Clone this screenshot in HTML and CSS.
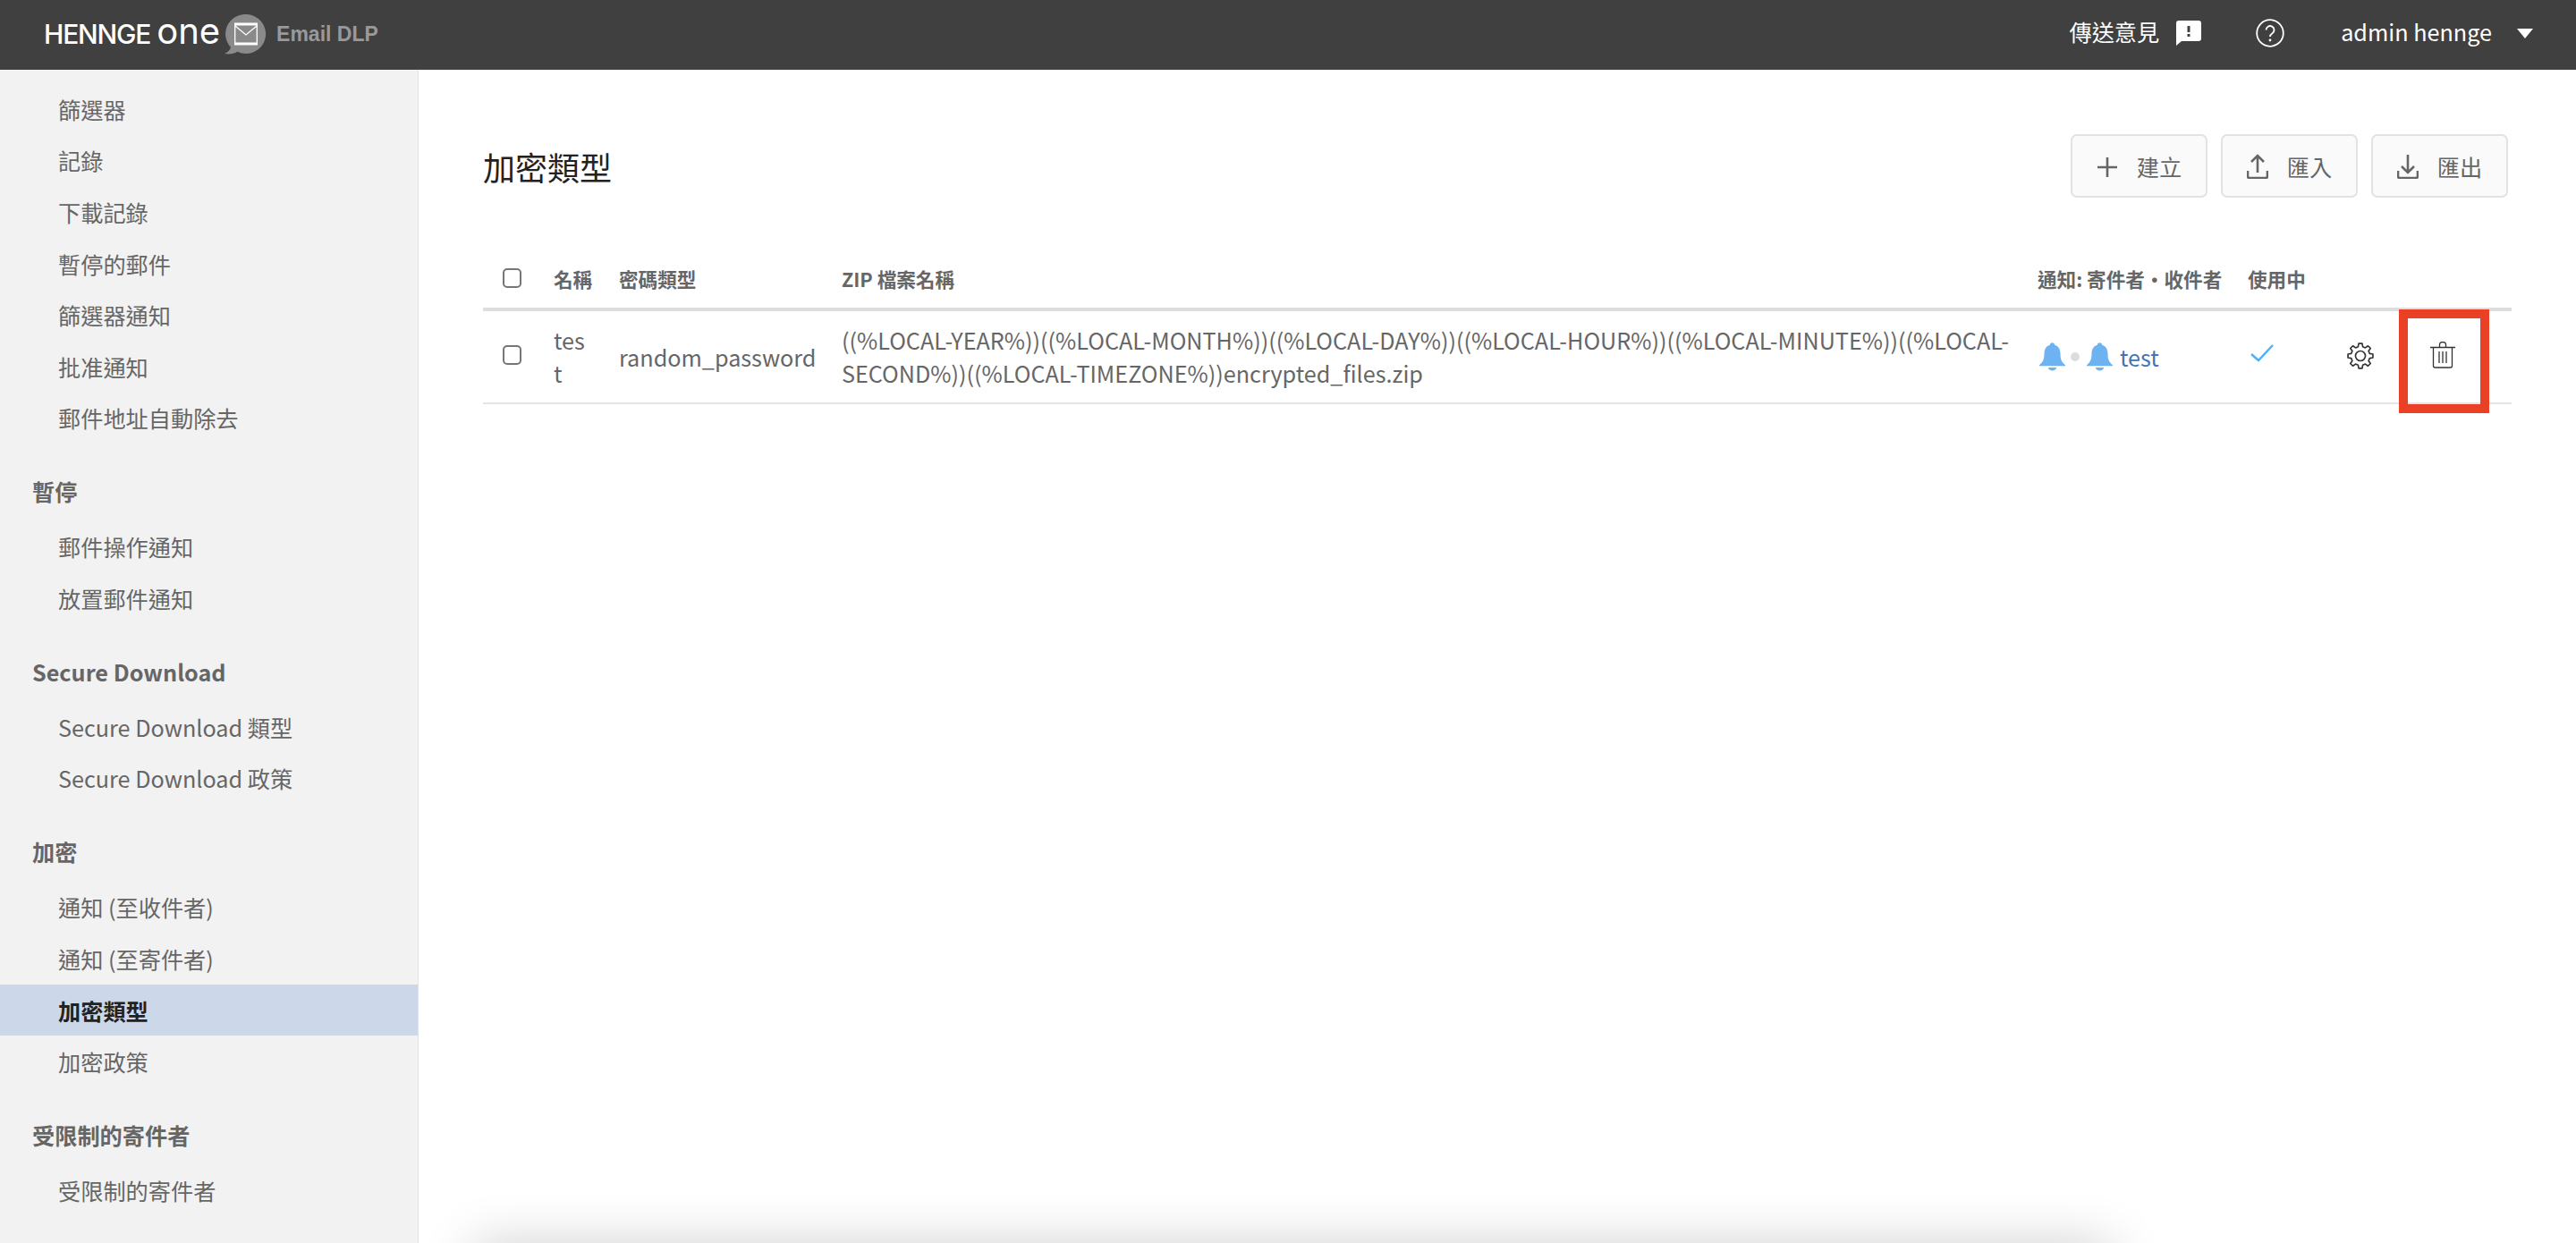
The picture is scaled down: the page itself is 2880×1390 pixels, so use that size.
FILE: index.html
```html
<!DOCTYPE html>
<html lang="zh-Hant">
<head>
<meta charset="utf-8">
<title>加密類型</title>
<link rel="stylesheet" href="styles.css">
</head>
<body>
<div class="app">
  <header class="topbar">
    <div class="brand">
      <span class="logo-word">HENNGE</span><span class="logo-one">one</span>
      <svg class="logo-icon" viewBox="0 0 48 46" aria-hidden="true">
        <path class="logo-bubble" d="M25 0a22 22 0 1 1-9.500 41.800C11 44.500 6 45 1 44c3.500-1.500 6-4 7-7A22 22 0 0 1 25 0z"/>
        <path class="logo-env" d="M12 11h26M12 33h26" stroke-width="3"/>
        <path class="logo-env" d="M12.700 11v22M37.300 11v22M13 13l12 10 12-10" stroke-width="1.300"/>
      </svg>
      <span class="product">Email DLP</span>
    </div>
    <div class="top-actions">
      <span class="feedback">傳送意見</span>
      <svg class="feedback-icon" viewBox="0 0 28 28" aria-hidden="true"><path d="M3 0h22a3 3 0 0 1 3 3v17a3 3 0 0 1-3 3H6l-6 5V3a3 3 0 0 1 3-3zM12.500 6v7h3V6zm0 9v3h3v-3z" fill-rule="evenodd"/></svg>
      <svg class="help-icon" viewBox="0 0 32 32" aria-hidden="true"><circle cx="16" cy="16" r="14.800"/><path d="M11.500 12.500a4.500 4.500 0 1 1 7 3.800c-1.500 1-2.500 1.800-2.500 3.700"/><circle class="help-dot" cx="16" cy="24" r="1.400"/></svg>
      <span class="user">admin hennge</span>
      <span class="caret"></span>
    </div>
  </header>
  <div class="body">
    <nav class="sidebar">
      <a class="nav-item">篩選器</a>
      <a class="nav-item">記錄</a>
      <a class="nav-item">下載記錄</a>
      <a class="nav-item">暫停的郵件</a>
      <a class="nav-item">篩選器通知</a>
      <a class="nav-item">批准通知</a>
      <a class="nav-item">郵件地址自動除去</a>
      <h3 class="nav-head">暫停</h3>
      <a class="nav-item">郵件操作通知</a>
      <a class="nav-item">放置郵件通知</a>
      <h3 class="nav-head">Secure Download</h3>
      <a class="nav-item">Secure Download 類型</a>
      <a class="nav-item">Secure Download 政策</a>
      <h3 class="nav-head">加密</h3>
      <a class="nav-item">通知 (至收件者)</a>
      <a class="nav-item">通知 (至寄件者)</a>
      <a class="nav-item active">加密類型</a>
      <a class="nav-item">加密政策</a>
      <h3 class="nav-head">受限制的寄件者</h3>
      <a class="nav-item">受限制的寄件者</a>
    </nav>
    <main class="content">
      <div class="toolbar">
        <h1 class="title">加密類型</h1>
        <div class="buttons">
          <button class="btn"><svg class="btn-icon" viewBox="0 0 24 28" aria-hidden="true"><path d="M12 4v22M1 15h22"/></svg>建立</button>
          <button class="btn"><svg class="btn-icon" viewBox="0 0 24 28" aria-hidden="true"><path d="M12 21V2M5 9l7-7 7 7M1 19v6a2 2 0 0 0 2 2h18a2 2 0 0 0 2-2v-6"/></svg>匯入</button>
          <button class="btn"><svg class="btn-icon" viewBox="0 0 24 28" aria-hidden="true"><path d="M12 1v19M5 14l7 7 7-7M1 19v6a2 2 0 0 0 2 2h18a2 2 0 0 0 2-2v-6"/></svg>匯出</button>
        </div>
      </div>
      <table class="grid">
        <colgroup>
          <col class="c-check"><col class="c-name"><col class="c-pass"><col class="c-zip"><col class="c-notify"><col class="c-active"><col class="c-gear"><col class="c-trash">
        </colgroup>
        <thead>
          <tr>
            <th class="cell-check"><input type="checkbox" class="check"></th>
            <th>名稱</th>
            <th>密碼類型</th>
            <th>ZIP 檔案名稱</th>
            <th>通知: 寄件者・收件者</th>
            <th>使用中</th>
            <th></th>
            <th></th>
          </tr>
        </thead>
        <tbody>
          <tr>
            <td class="cell-check"><input type="checkbox" class="check check-row"></td>
            <td class="cell-name">test</td>
            <td>random_password</td>
            <td>((%LOCAL-YEAR%))((%LOCAL-MONTH%))((%LOCAL-DAY%))((%LOCAL-HOUR%))((%LOCAL-MINUTE%))((%LOCAL-SECOND%))((%LOCAL-TIMEZONE%))encrypted_files.zip</td>
            <td>
              <div class="notify">
                <svg class="bell" viewBox="0 0 24 26" aria-hidden="true"><path d="M12 0c1.300 0 2.200.9 2.200 2.100C18.300 3.200 19.500 7 19.500 11c0 4.500 1.300 7 4.500 9.700v.8H0v-.8C3.200 18 4.500 15.500 4.500 11c0-4 1.200-7.800 5.300-8.900C9.800.9 10.700 0 12 0z"/><path d="M8 23h8c-.6 1.800-2.100 2.800-4 2.800S8.600 24.800 8 23z"/></svg>
                <span class="dot"></span>
                <svg class="bell" viewBox="0 0 24 26" aria-hidden="true"><path d="M12 0c1.300 0 2.200.9 2.200 2.100C18.300 3.200 19.500 7 19.500 11c0 4.500 1.300 7 4.500 9.700v.8H0v-.8C3.200 18 4.500 15.500 4.500 11c0-4 1.200-7.800 5.300-8.900C9.800.9 10.700 0 12 0z"/><path d="M8 23h8c-.6 1.800-2.100 2.800-4 2.800S8.600 24.800 8 23z"/></svg>
                <a class="link">test</a>
              </div>
            </td>
            <td class="cell-flag"><svg class="tick" viewBox="0 0 26 20" aria-hidden="true"><path d="M1 11l8 7L25 1"/></svg></td>
            <td class="cell-icon">
              <svg class="gear" viewBox="-12.500 -12.500 25 25" aria-hidden="true"><path d="M-2.010-8.050L-1.530-10.890 1.530-10.890 2.010-8.050 4.270-7.110 6.620-8.780 8.780-6.620 7.110-4.270 8.050-2.010 10.890-1.530 10.890 1.530 8.050 2.010 7.110 4.270 8.780 6.620 6.620 8.780 4.270 7.110 2.010 8.050 1.530 10.890-1.530 10.890-2.010 8.050-4.270 7.110-6.620 8.780-8.780 6.620-7.110 4.270-8.050 2.010-10.890 1.530-10.890-1.530-8.050-2.010-7.110-4.270-8.780-6.620-6.620-8.780-4.270-7.110z"/><circle r="4.300"/></svg>
            </td>
            <td class="cell-icon">
              <svg class="trash" viewBox="0 0 28 30" aria-hidden="true"><path d="M0 6.500h28M10.500 6.500V3.500a3.500 3 0 0 1 7 0v3M3.500 6.500V27a2 2 0 0 0 2 2h17a2 2 0 0 0 2-2V6.500M10 11v13M14 11v13M18 11v13"/></svg>
            </td>
          </tr>
        </tbody>
      </table>
    </main>
  </div>
  <div class="highlight"></div>
  <div class="under-shadow"></div>
</div>
</body>
</html>
```
FILE: styles.css
```css
* { box-sizing: border-box; }
html, body { margin: 0; height: 100%; }
body {
  font-family: "Noto Sans CJK TC", "Noto Sans", sans-serif;
  font-size: 25.200px;
  color: #666;
  background: #fff;
  overflow: hidden;
}
.app { position: relative; height: 100vh; display: flex; flex-direction: column; overflow: hidden; }

.topbar {
  flex: none; height: 78px; background: #404040; color: #fff;
  display: flex; align-items: center; justify-content: space-between;
  padding: 0 48px 2px 49px;
}
.brand { display: flex; align-items: center; }
.logo-word { font-family: Inter, sans-serif; font-weight: 500; font-size: 30px; letter-spacing: -1.200px; line-height: 1; }
.logo-one { font-family: Inter, sans-serif; font-weight: 400; font-size: 40px; line-height: 1; margin: -7px 0 0 7px; }
.logo-icon { width: 48px; height: 46px; margin: 2px 0 0 4px; }
.logo-bubble { fill: #8a8a8a; }
.logo-env { fill: none; stroke: #fff; }
.product { font-family: "Liberation Sans", sans-serif; font-weight: 700; font-size: 23px; color: #999; margin-left: 11px; }
.top-actions { display: flex; align-items: center; margin-top: -2px; }
.feedback { margin-top: -5px; }
.feedback-icon { width: 28px; height: 28px; fill: #fff; margin-left: 19px; }
.help-icon { width: 32px; height: 32px; margin-left: 61px; fill: none; stroke: #fff; stroke-width: 1.800; }
.help-dot { fill: #fff; stroke: none; }
.user { margin-left: 63px; margin-top: -5px; }
.caret { width: 0; height: 0; margin-left: 28px; border-left: 9px solid transparent; border-right: 9px solid transparent; border-top: 11px solid #fff; }

.body { flex: 1; display: flex; min-height: 0; }
.sidebar {
  flex: none; width: 468px; padding-top: 15px;
  background: #f2f2f2; border-right: 1px solid #e2e2e2;
  display: flex; flex-direction: column;
}
.nav-item { height: 57.600px; flex: none; display: flex; align-items: center; padding-left: 65px; color: #666; }
.nav-item.active { background: #ccd8ea; color: #222; font-weight: 700; width: 467px; }
.nav-head { margin: 28.200px 0 8.200px; height: 50px; padding-left: 36px; display: flex; align-items: center; font-size: 25.200px; font-weight: 700; color: #666; }

.content { flex: 1; min-width: 0; padding: 72px 72px 0; }
.toolbar { display: flex; align-items: center; justify-content: space-between; padding-right: 4px; }
.title { margin: 2px 0 0; font-size: 36px; font-weight: 400; color: #222; line-height: 69px; }
.buttons { display: flex; gap: 15px; }
.btn {
  width: 153px; height: 71px; padding: 0;
  display: flex; align-items: center; justify-content: center; gap: 21px;
  background: #fafafa; border: 2px solid #e2e2e2; border-radius: 7px;
  font: inherit; color: #666;
}
.btn-icon { width: 24px; height: 28px; fill: none; stroke: #666; stroke-width: 2.600; }

.grid { width: 2268px; margin-top: 57px; border-collapse: collapse; table-layout: fixed; }
.c-check { width: 64px; } .c-name { width: 73px; } .c-pass { width: 249px; } .c-zip { width: 1337px; }
.c-notify { width: 235px; } .c-active { width: 102px; } .c-gear { width: 80px; } .c-trash { width: 128px; }
.grid th {
  height: 68px; padding: 0 15px; text-align: left; font-size: 21.600px; font-weight: 700; color: #666;
  border-bottom: 4px solid #ddd; white-space: nowrap;
}
.grid td { padding: 14px 15px; line-height: 37px; color: #666; border-bottom: 2px solid #e4e4e4; vertical-align: middle; }
.grid .cell-check { padding: 0 0 0 22px; }
.grid .cell-name { word-break: break-all; padding-right: 18px; }
.check { appearance: none; display: block; width: 21px; height: 22px; margin: 0; border: 2px solid #767676; border-radius: 5px; background: #fff; }
.check-row { margin-top: -4px; }
.notify { display: flex; align-items: center; margin-left: 2px; }
.bell { width: 29px; height: 32px; fill: #6db3f2; }
.dot { width: 10px; height: 10px; margin: 0 8px 0 6px; border-radius: 50%; background: #ddd; }
.link { color: #3f75b5; margin-left: 8px; }
.cell-flag { padding-left: 18px !important; }
.tick { display: block; width: 26px; height: 20px; fill: none; stroke: #4db1fb; stroke-width: 2.500; margin-top: -8px; }
.cell-icon { padding: 0 !important; }
.gear { display: block; width: 32px; height: 32px; margin: -2px 0 0 23px; fill: none; stroke: #333; stroke-width: 1.300; stroke-linejoin: round; }
.trash { display: block; width: 28px; height: 30px; margin: -4px 0 0 37px; fill: none; stroke: #333; stroke-width: 1.300; }

.highlight { position: absolute; left: 2682px; top: 346px; width: 101px; height: 116px; border: 10px solid #ea4025; }
.under-shadow { position: absolute; left: 530px; width: 1830px; top: 1392px; height: 60px; background: #fff; box-shadow: 0 0 60px rgba(0, 0, 0, .2); }
```
